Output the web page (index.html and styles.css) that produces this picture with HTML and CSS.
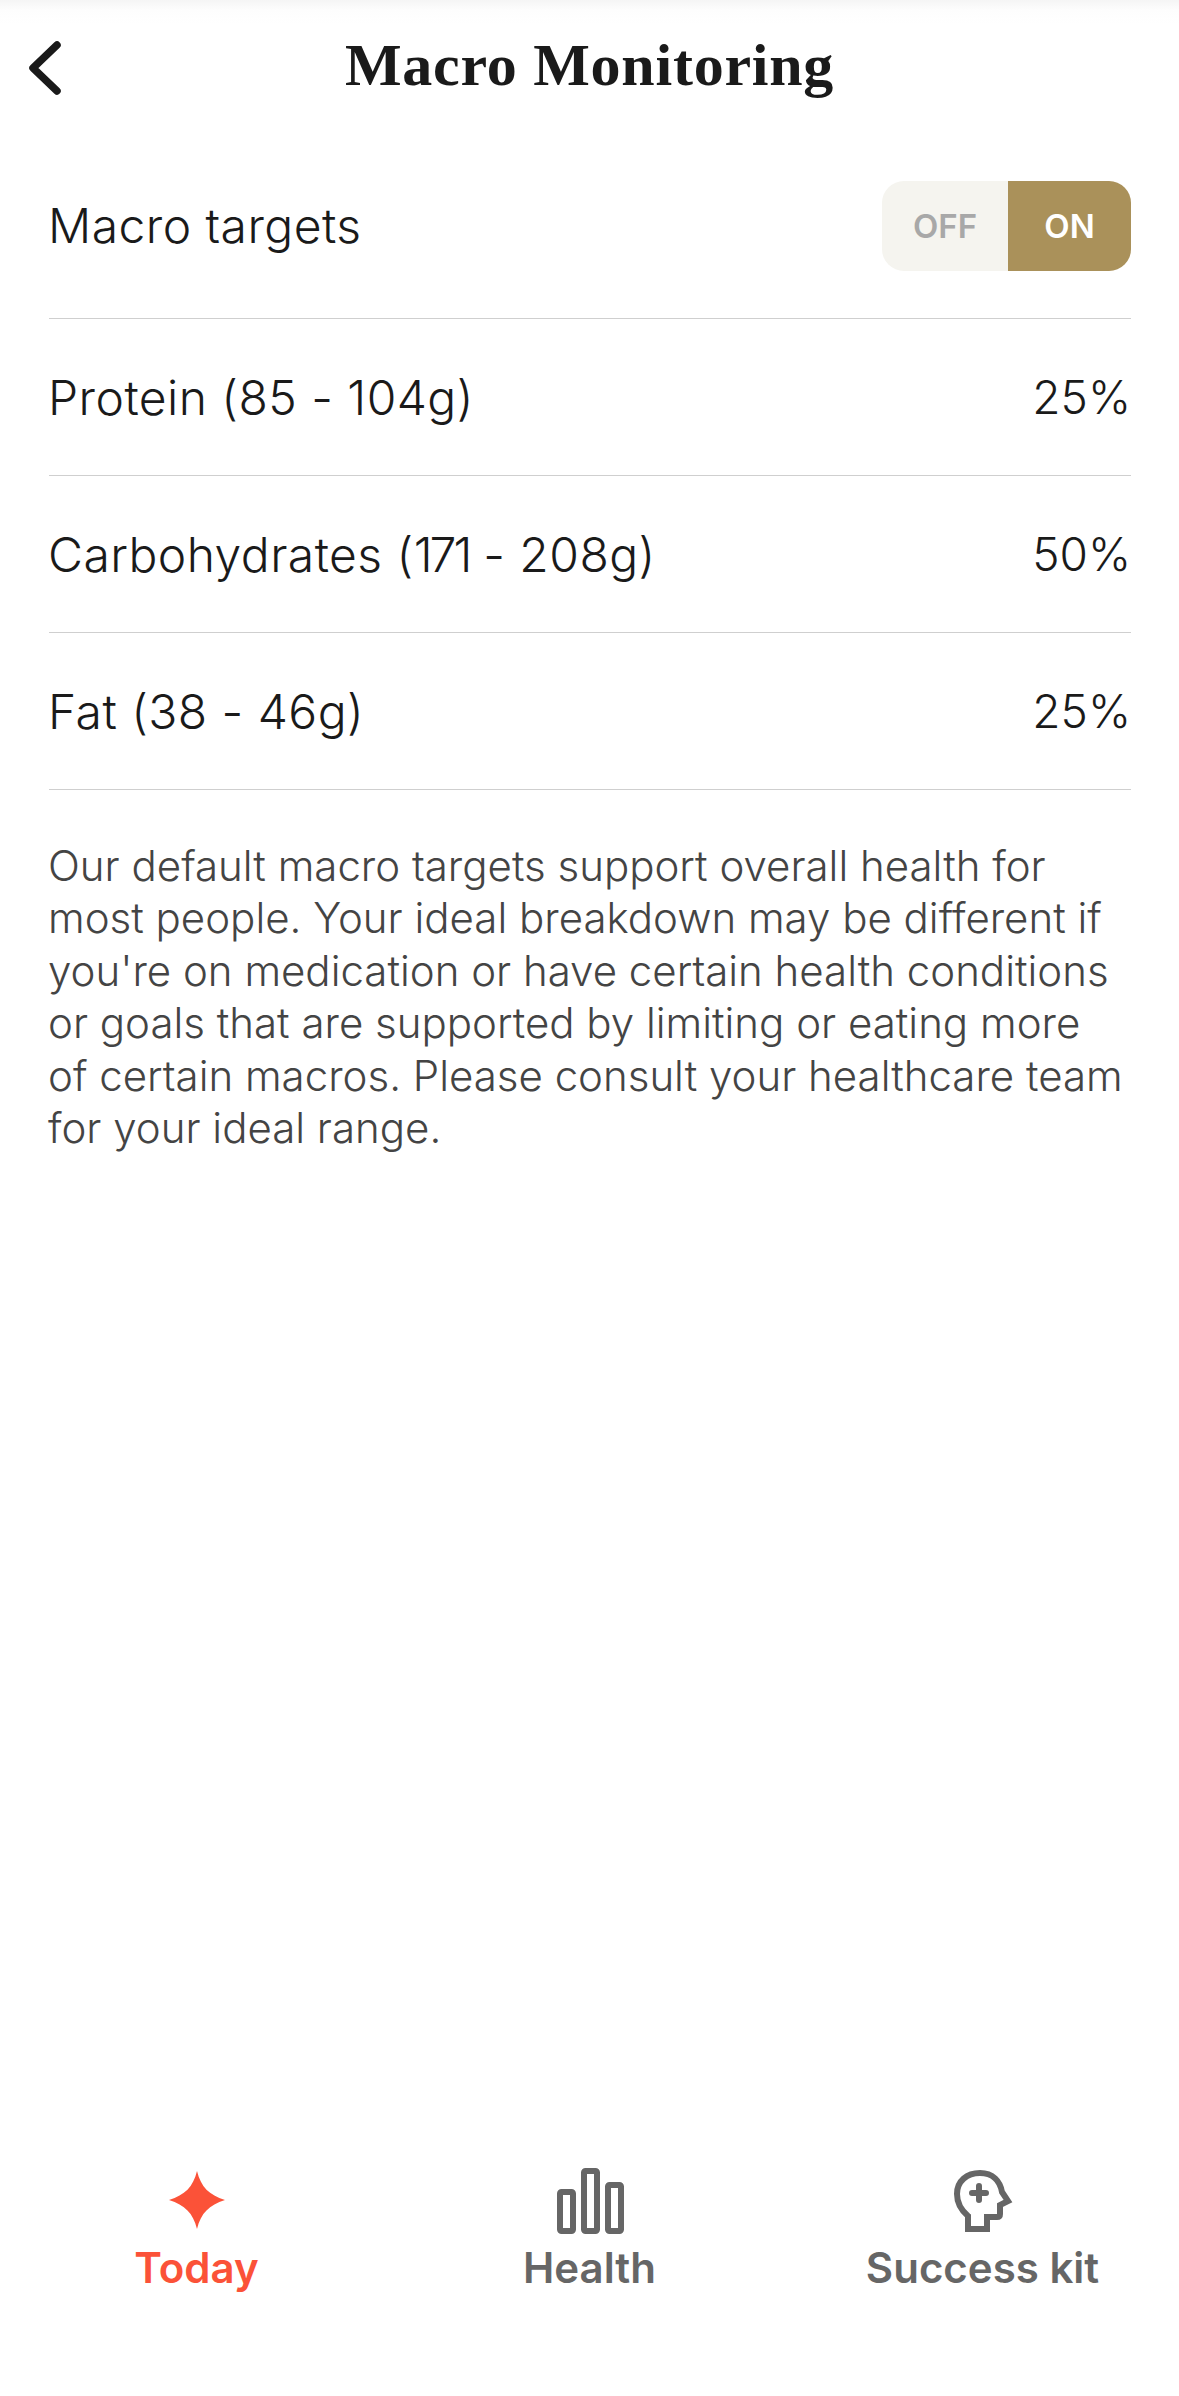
FILE: index.html
```html
<!DOCTYPE html>
<html>
  <head>
    <title>Macro Monitoring</title>
    <link rel="stylesheet" href="styles.css">
  </head>
<body>
  <div class="page">
    <header class="top">
      <svg class="back" viewBox="0 0 40 62" width="40" height="62">
        <path d="M32 8 L8 31 L32 54" fill="none" stroke="#1a1a1a" stroke-width="7.5" stroke-linecap="round" stroke-linejoin="round"/>
      </svg>
      <h1>Macro Monitoring</h1>
    </header>

    <main class="content">
      <div class="row row-toggle">
        <span class="label">Macro targets</span>
        <div class="toggle">
          <span class="off">OFF</span>
          <span class="on">ON</span>
        </div>
      </div>
      <div class="row"><span class="label">Protein (85 - 104g)</span><span>25%</span></div>
      <div class="row"><span class="label">Carbohydrates (<span class="narrow">171</span> - 208g)</span><span>50%</span></div>
      <div class="row"><span class="label">Fat (38 - 46g)</span><span>25%</span></div>
      <p class="note">Our default macro targets support overall health for<br>most people. Your ideal breakdown may be different if<br>you're on medication or have certain health conditions<br>or goals that are supported by limiting or eating more<br>of certain macros. Please consult your healthcare team<br>for your ideal range.</p>
    </main>

    <nav class="tabs">
      <div class="tab active">
        <svg viewBox="0 0 60 66" width="60" height="66">
          <path d="M30 3 C34 19 42 27 58 32 C42 37 34 45 30 61 C26 45 18 37 2 32 C18 27 26 19 30 3 Z" fill="#fb5238"/>
        </svg>
        <span>Today</span>
      </div>
      <div class="tab">
        <svg viewBox="0 0 68 66" width="68" height="66">
          <g fill="none" stroke="#666" stroke-width="6" stroke-linejoin="round">
            <rect x="4" y="24" width="13" height="39" rx="1.5"/>
            <rect x="28" y="3" width="13" height="60" rx="1.5"/>
            <rect x="52" y="17" width="13" height="46" rx="1.5"/>
          </g>
        </svg>
        <span>Health</span>
      </div>
      <div class="tab">
        <svg viewBox="0 0 60 66" width="60" height="66">
          <path d="M15 61 V48 C8 42 4 35 4 26 C4 13 14 5 27 5 C40 5 47 13 49 24 L55 33 L47 37 V46 C47 48 46 49 44 49 H34 V61 Z" fill="none" stroke="#666" stroke-width="6"/>
          <path d="M26 18 V32 M19 25 H33" fill="none" stroke="#666" stroke-width="6" stroke-linecap="round"/>
        </svg>
        <span>Success kit</span>
      </div>
    </nav>
  </div>
</body>
</html>
```

FILE: styles.css
```css
html, body { margin: 0; padding: 0; background: #fff; }

.page {
  width: 1179px;
  height: 2396px;
  display: flex;
  flex-direction: column;
  font-family: Inter, "Liberation Sans", sans-serif;
  color: #1a1a1a;
  background: linear-gradient(#f5f5f5 0, #fdfdfd 10px, #fff 24px);
}

.top { height: 131px; display: flex; align-items: center; justify-content: center; position: relative; }
.back { position: absolute; left: 25px; top: 37px; }
h1 { margin: 0; font: bold 60px "Liberation Serif", serif; letter-spacing: 0.75px; color: #1a1a1a; }

.content { padding: 0 48px 0 49px; }

.row {
  height: 156px;
  display: flex;
  align-items: center;
  justify-content: space-between;
  border-bottom: 1px solid #cfcfcf;
  font-size: 46px;
  font-weight: 300;
}
.label { font-size: 48px; letter-spacing: 0.45px; margin-left: -1px; }
.narrow { letter-spacing: -3px; }
.row-toggle { height: 188px; padding-top: 2px; box-sizing: border-box; }

.toggle {
  width: 249px;
  height: 90px;
  display: flex;
  border-radius: 22px;
  overflow: hidden;
  font-size: 33px;
  font-weight: 600;
}
.toggle span { display: flex; align-items: center; justify-content: center; }
.off { width: 126px; background: #f5f4ef; color: #a8a8a8; }
.on { width: 123px; background: #aa915a; color: #fff; }

.note {
  margin: 50px 0 0 -1px;
  font-size: 42px;
  line-height: 52.4px;
  font-weight: 300;
  color: #444;
  white-space: nowrap;
}

.tabs { margin-top: auto; height: 238px; display: grid; grid-template-columns: repeat(3, 1fr); }
.tab { display: flex; flex-direction: column; align-items: center; font-size: 42px; font-weight: 600; color: #666; }
.tab svg { display: block; margin-top: 10px; }
.tab span { margin-top: 8px; }
.tab.active { color: #fb5238; }
```
